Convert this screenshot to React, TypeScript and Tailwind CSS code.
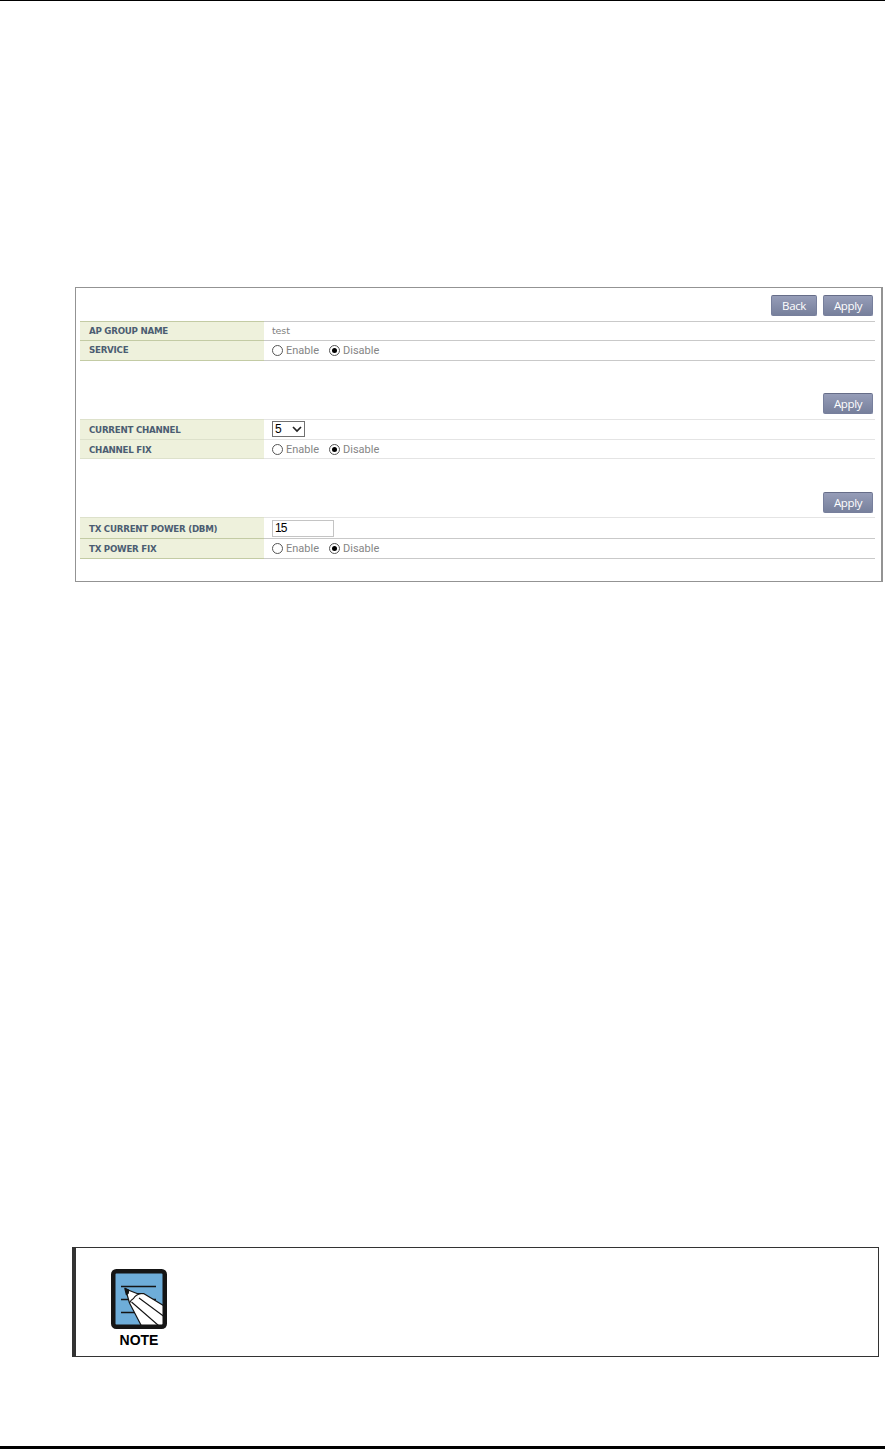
import type { ReactNode } from 'react';

const App = () => {
  return (
    <div className="flex h-[1449px] w-[885px] flex-col overflow-hidden border-t border-b-3 border-black bg-white">
      <main className="mt-[286px] ml-[75px] h-[295px] w-[808px] border border-r-2 border-[#939393] pt-[7px] pr-[6px] pl-1">
        <Toolbar>
          <Button className="w-[46px]">Back</Button>
          <Button className="w-[50px]">Apply</Button>
        </Toolbar>
        <div className="mt-[5px]">
          <Line />
          <Row label="AP GROUP NAME" height="h-[18px]">
            <span className="font-['DejaVu_Sans',sans-serif] text-[9.5px] tracking-[-0.1px] text-[#808080]">test</span>
          </Row>
          <Line />
          <Row label="SERVICE" height="h-[19px]">
            <RadioPair />
          </Row>
          <Line />
        </div>

        <div className="mt-8">
          <Toolbar>
            <Button className="w-[50px]">Apply</Button>
          </Toolbar>
        </div>
        <div className="mt-[5px]">
          <Line light />
          <Row label="CURRENT CHANNEL" height="h-[19px]" labelClass="pt-[2px]">
            <div className="mb-px flex h-4 w-[33px] items-center justify-between border border-[#707070] bg-white pr-[2px] pl-[2px]">
              <span className="font-['Liberation_Sans',sans-serif] text-[12px] leading-none text-black">5</span>
              <svg width="10" height="7" viewBox="0 0 10 7" fill="none" stroke="#222" strokeWidth="1.7">
                <path d="M1 1l4 4 4-4" />
              </svg>
            </div>
          </Row>
          <Line light />
          <Row label="CHANNEL FIX" height="h-[18px]" labelClass="pt-[2px]">
            <RadioPair />
          </Row>
          <Line light />
        </div>

        <div className="mt-[33px]">
          <Toolbar>
            <Button className="w-[50px]">Apply</Button>
          </Toolbar>
        </div>
        <div className="mt-1">
          <Line light />
          <Row label="TX CURRENT POWER (DBM)" height="h-[20px]" labelClass="pt-[2px]">
            <div className="flex h-[17px] w-[62px] items-center border border-[#c4c4c4] bg-white pl-[2px] font-['Liberation_Sans',sans-serif] text-[12px] leading-none tracking-[-0.8px] text-black">
              15
            </div>
          </Row>
          <Line />
          <Row label="TX POWER FIX" height="h-[19px]" labelClass="pt-[1px]">
            <RadioPair />
          </Row>
          <Line />
        </div>
      </main>

      <aside className="mt-[665px] ml-[72px] h-[110px] w-[807px] border border-l-4 border-[#333] pt-[21px] pl-[35px]">
        <div className="flex w-14 flex-col items-center">
          <NoteIcon />
          <span className="mt-[4px] font-['Liberation_Sans',sans-serif] text-[14px] leading-[14px] font-bold text-black">
            NOTE
          </span>
        </div>
      </aside>
    </div>
  );
};

const Toolbar = ({ children }: { children: ReactNode }) => (
  <div className="flex justify-end gap-[6px] pr-[2px]">{children}</div>
);

const Button = ({ className, children }: { className: string; children: ReactNode }) => (
  <button
    className={`h-[21px] rounded-[2px] border border-[#777f9c] border-t-[#666d88] bg-linear-to-b from-[#969db8] to-[#77809c] font-['Open_Sans',sans-serif] text-[11.5px] leading-[19px] font-medium tracking-[-0.4px] text-white ${className}`}
  >
    {children}
  </button>
);

const Line = ({ light = false }: { light?: boolean }) => (
  <div className="flex h-px">
    <div className={`w-[184px] ${light ? 'bg-[#dde1cb]' : 'bg-[#c3cba4]'}`} />
    <div className={`flex-1 ${light ? 'bg-[#e4e4e4]' : 'bg-[#c9c9c9]'}`} />
  </div>
);

type RowProps = {
  label: string;
  height: string;
  labelClass?: string;
  children: ReactNode;
};

const Row = ({ label, height, labelClass = '', children }: RowProps) => (
  <div className={`flex ${height}`}>
    <div
      className={`flex w-[184px] items-center bg-[#eef1dc] pl-[9px] font-['DejaVu_Sans',sans-serif] text-[8.7px] leading-none font-bold tracking-[-0.26px] whitespace-nowrap text-[#4c5d72] ${labelClass}`}
    >
      {label}
    </div>
    <div className="flex flex-1 items-center pl-2 leading-none">{children}</div>
  </div>
);

const RadioPair = () => (
  <div className="flex items-center font-['Roboto',sans-serif] text-[11px] leading-none text-[#858585]">
    <Radio />
    <span className="ml-[3px] w-[43px]">Enable</span>
    <Radio checked />
    <span className="ml-[3px]">Disable</span>
  </div>
);

const Radio = ({ checked = false }: { checked?: boolean }) => (
  <span className="flex size-[11px] items-center justify-center rounded-full border border-[#555] bg-white">
    {checked && <span className="size-[5px] rounded-full bg-black" />}
  </span>
);

const NoteIcon = () => (
  <svg width="56" height="60" viewBox="0 0 56 60">
    <rect x="2" y="2" width="52" height="56" fill="#6eadd9" />
    <path d="M10 17.500h35M10 30.500h35M10 43.500h20" stroke="#151515" strokeWidth="1.3" />
    <path
      d="M14.500 20L26 24.500l7 .2L54 37.500V58H31L18.500 34z"
      fill="#fff"
      stroke="#151515"
      strokeWidth="1.2"
      strokeLinejoin="round"
    />
    <path
      d="M18.500 34c.8-2 2-3.500 4-4.500 1.500-2.500 3.500-4.200 7.500-5M20.500 33l27 23.500M28 29l25 18.500"
      fill="none"
      stroke="#151515"
      strokeWidth="1.1"
    />
    <path d="M14 19.500l3.500 1.700-.4 3-1.600 1.300z" fill="#151515" stroke="#151515" strokeWidth="1.500" strokeLinejoin="round" />
    <rect x="2.250" y="2.250" width="51.500" height="55.500" rx="3" fill="none" stroke="#151515" strokeWidth="4.500" />
  </svg>
);

export default App;
